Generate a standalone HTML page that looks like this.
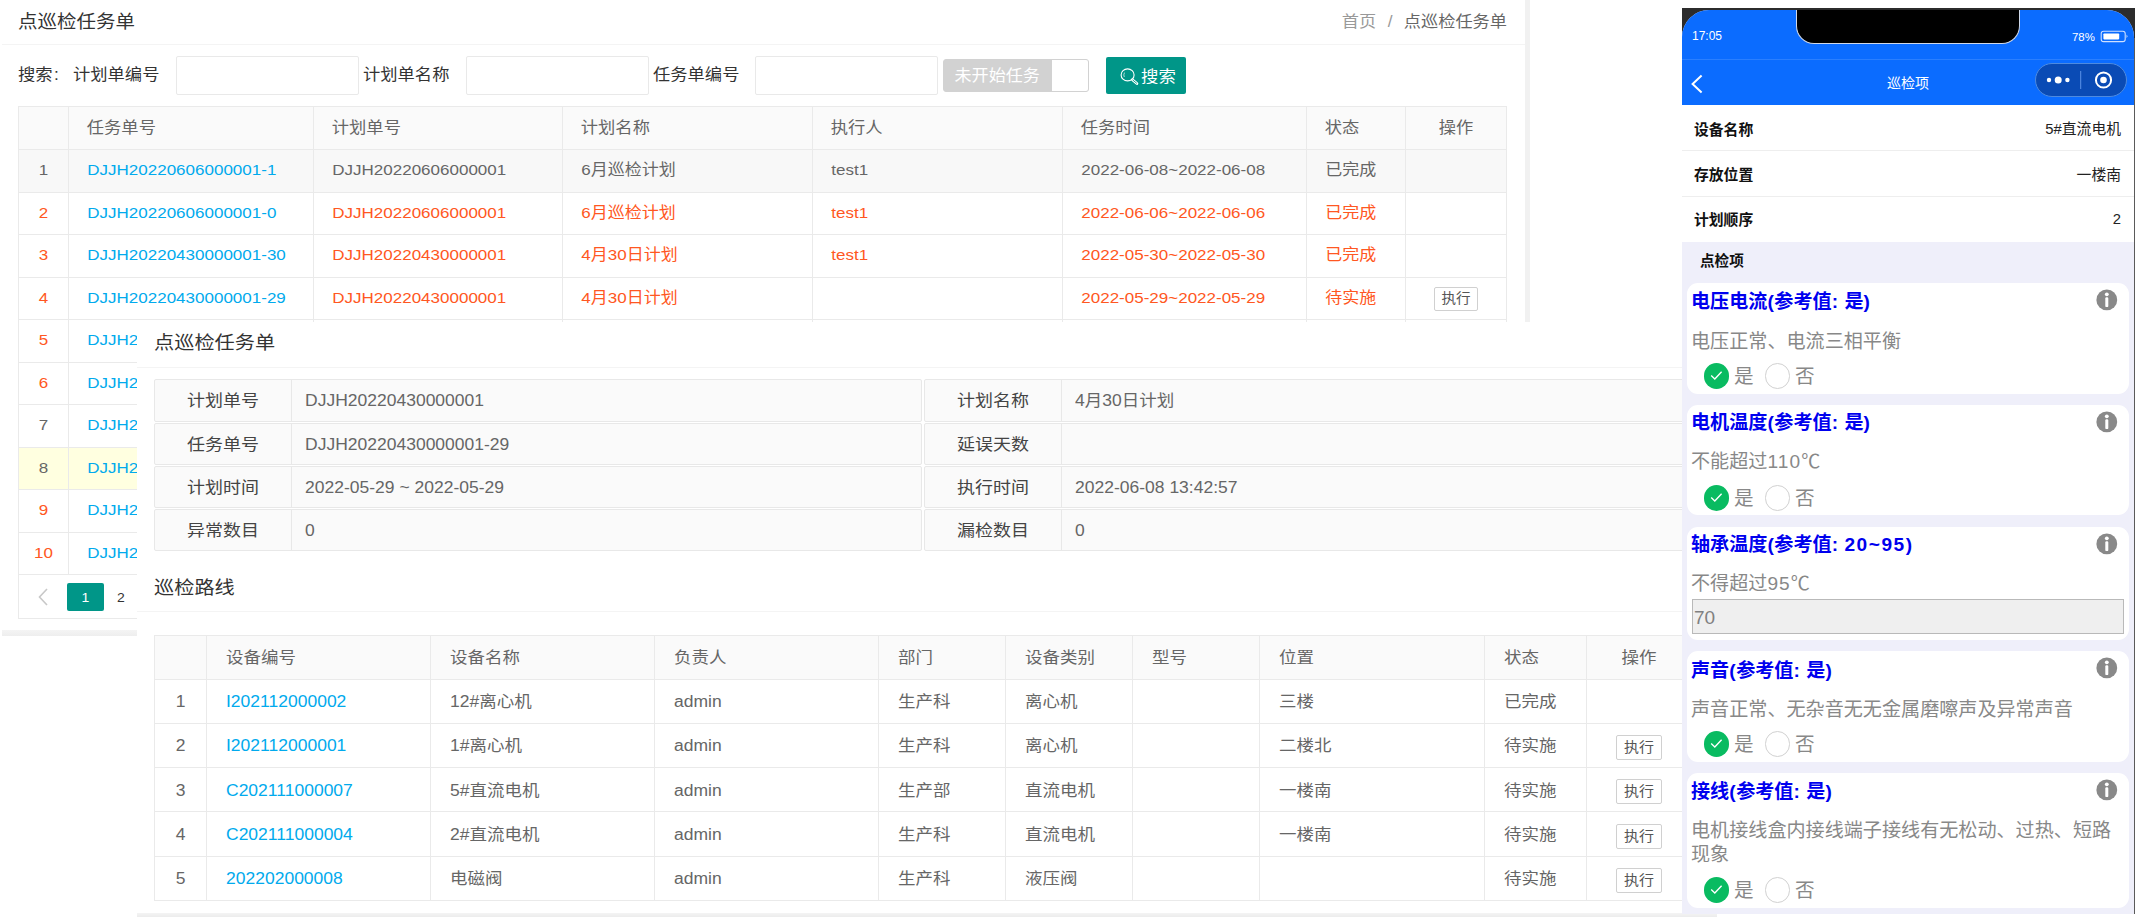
<!DOCTYPE html>
<html lang="zh-CN">
<head>
<meta charset="utf-8">
<title>点巡检任务单</title>
<style>
*{box-sizing:border-box;margin:0;padding:0}
html,body{width:2138px;height:924px;background:#fff;overflow:hidden}
body{position:relative;font-family:"Liberation Sans","Noto Sans CJK SC",sans-serif;color:#555;font-size:16.6px}
.abs{position:absolute}
/* ---------- panel 1 ---------- */
#p1{position:absolute;left:0;top:0;width:1530px;height:640px;background:#fff;overflow:hidden}
#p1 .hd{position:absolute;left:18px;top:10px;font-size:19.5px;color:#333;line-height:24px}
#p1 .bc{position:absolute;right:23px;top:9.5px;font-size:17.2px;line-height:24px;color:#999;white-space:nowrap}
#p1 .bc b{font-weight:normal;color:#666}
#p1 .bc i{font-style:normal;margin:0 11.4px 0 11.6px;color:#999}
#p1 .hl{position:absolute;left:2px;top:44px;width:1523px;height:1px;background:#f4f4f4}
#p1 .vbar{position:absolute;left:1525px;top:0;width:5px;height:322px;background:#f1f1f1}
#p1 .hbar{position:absolute;left:2px;top:630px;width:135px;height:6px;background:linear-gradient(#f4f4f4,#eeeeee)}
.lab{position:absolute;top:62.5px;line-height:24px;font-size:17.3px;color:#333;white-space:nowrap}
.inp{position:absolute;top:56px;height:39px;border:1px solid #e9e9e9;border-radius:2px;background:#fff}
.sw{position:absolute;left:942.5px;top:59px;width:146.5px;height:33px;border:1px solid #d2d2d2;border-radius:3px;background:#d2d2d2;color:#fff;font-size:17.1px;line-height:32px;padding-left:11px;white-space:nowrap}
.sw s{position:absolute;right:0;top:0;width:36px;height:31px;background:#fff;border-radius:0 2px 2px 0}
.btn{position:absolute;left:1106px;top:57px;width:80px;height:37px;background:#009688;border-radius:2px;color:#fff;font-size:17.4px;line-height:40.5px;white-space:nowrap}
.btn svg{position:absolute;left:13px;top:10px}
.btn>span{position:absolute;left:35px;top:0}
table{border-collapse:collapse;table-layout:fixed}
.t1{position:absolute;left:18px;top:106px;width:1489px;font-size:17px;color:#666}
.t1 td,.t1 th{border:1px solid #eaeaea;height:42.5px;line-height:20px;padding:0 0 0 18.3px;text-align:left;font-weight:normal;white-space:nowrap;overflow:hidden}
.t1 th{background:#fafafa;height:43px;color:#666;padding-top:2px;font-size:17.3px;padding-left:17.8px}
.t1 td:first-child,.t1 th:first-child{padding:0;text-align:center}
.t1 tr.r td{color:#FF5722}
.t1 td.k,.t1 tr.r td.k{color:#01AAED}
.t1 tr.g td{background:#f8f8f8}
.t1 tr.y td{background:#ffffe0}
.ex{display:inline-block;border:1px solid #d0d0d0;border-radius:2px;background:#fff;color:#555;font-size:14.6px;line-height:21px;height:24px;padding:0 6.5px;position:relative;top:1px}
.pg{position:absolute;left:18px;top:575px;width:120px;height:44px;border:1px solid #eaeaea;border-top:none}
.pg .pv{position:absolute;left:18px;top:12px}
.pg .cur{position:absolute;left:48px;top:8px;width:37px;height:28px;background:#009688;color:#fff;border-radius:2px;text-align:center;line-height:28px;font-size:14px}
.pg .n2{position:absolute;left:98px;top:8px;line-height:28px;font-size:14px;color:#333}

/* ---------- panel 2 ---------- */
#p2{position:absolute;left:137px;top:322px;width:1580px;height:595px;background:#fff;overflow:hidden;font-size:17.5px;color:#666}
#p2 .h2{position:absolute;left:17px;font-size:20.2px;line-height:26px;color:#333;white-space:nowrap}
#p2 .ln{position:absolute;left:0;width:1560px;height:1px;background:#f4f4f4}
.fr{position:absolute;height:42.4px;border:1px solid #e8e8e8;border-radius:2px;background:#fafafa}
.fr .l{position:absolute;left:0;top:0;width:137px;height:40.4px;border-right:1px solid #e8e8e8;text-align:center;line-height:42.5px;color:#444;font-size:18px;white-space:nowrap}
.fr .v{position:absolute;left:150px;top:0;line-height:41.5px;color:#666;white-space:nowrap}
.t2{position:absolute;left:17px;top:313px;width:1537px;font-size:17.5px;color:#666}
.t2 td,.t2 th{border:1px solid #eaeaea;height:44.3px;line-height:20px;padding:0 0 0 19px;text-align:left;font-weight:normal;white-space:nowrap;overflow:hidden}
.t2 th{background:#fafafa;height:43.6px}
.t2 td:first-child,.t2 th:first-child{padding:0;text-align:center}
.t2 td.k{color:#01AAED}
.t2 td.c,.t2 th.c{padding:0;text-align:center}
.t2 .ex{font-size:15px;height:25px;line-height:23px;padding:0 7px;position:relative;top:2px}
#p2 .bbar{position:absolute;left:0;top:591px;width:1580px;height:4px;background:linear-gradient(#f4f4f4,#ececec)}

/* ---------- panel 3 : phone ---------- */
#p3{position:absolute;left:1682px;top:8px;width:453px;height:906px;background:#2c2c2c;overflow:hidden;font-family:"Liberation Sans","Noto Sans CJK SC",sans-serif}
#p3 .scr{position:absolute;left:0;top:2px;width:452px;height:904px;background:#efeffa;border-radius:27px 27px 0 0;overflow:hidden}
#p3 .top{position:absolute;left:0;top:0;width:452px;height:95px;background:#0b6cff}
#p3 .sep{position:absolute;left:0;top:49px;width:452px;height:1px;background:#2a7fff}
#p3 .notch{position:absolute;left:114px;top:-20px;width:224px;height:54px;background:#000;border-radius:0 0 18px 18px;border:1px solid #cfd8e8;border-top:none}
#p3 .time{position:absolute;left:10px;top:19px;font-size:12px;line-height:14px;color:#fff}
#p3 .pct{position:absolute;left:390px;top:20px;font-size:11.4px;line-height:14px;color:#fff}
#p3 .nt{position:absolute;left:0;top:63px;width:452px;text-align:center;font-size:14px;line-height:20px;color:#fff}
#p3 .cap{position:absolute;left:353px;top:53px;width:92px;height:34px;border-radius:17px;background:#0a4bb5;border:1px solid #4d8ae0}
.row{position:absolute;left:0;width:452px;height:46px;background:#fff;border-bottom:1px solid #eee}
.row b{position:absolute;left:12px;top:13px;font-size:14.8px;line-height:20px;color:#111;font-weight:bold;white-space:nowrap}
.row span{position:absolute;right:13px;top:13px;font-size:14.8px;line-height:20px;color:#222;white-space:nowrap}
.sec{position:absolute;left:18px;top:241px;font-size:14.6px;line-height:20px;font-weight:bold;color:#111}
.card{position:absolute;left:5px;width:442px;background:#fff;border-radius:11px}
.card .ti u{text-decoration:none;letter-spacing:0.6px}
.card .ti{position:absolute;left:4px;top:7px;font-size:19.1px;line-height:24px;font-weight:bold;color:#0000ee;white-space:nowrap}
.card .de u{text-decoration:none;letter-spacing:1.1px}
.card .de{position:absolute;left:4px;top:44px;font-size:19.1px;line-height:24px;color:#888;width:432px}
.card .inf{position:absolute;left:409px;top:6px}
.rd{position:absolute;left:0;height:26px;width:200px}
.rd .on{position:absolute;left:16.5px;top:0;width:25.6px;height:25.6px;border-radius:50%;background:#09bb61}
.rd .on svg{position:absolute;left:6px;top:7px}
.rd .off{position:absolute;left:77.7px;top:0;width:25.6px;height:25.6px;border-radius:50%;background:#fff;border:1px solid #d1d1d1}
.rd i{position:absolute;top:0.5px;font-style:normal;font-size:19.6px;line-height:24px;color:#888}
.tin{position:absolute;left:5px;top:72px;width:432px;height:35px;background:#efefef;border:1px solid #b9b9b9;font-size:19px;line-height:36px;color:#808080;padding-left:1px}
.q{display:inline-block;transform:scaleY(.905);transform-origin:50% 50%}
.t1 .q{position:relative;top:-0.7px}
.t1 .ex .q{top:0}
.t2 .q{position:relative;top:0.7px}
.t2 .ex .q{top:0}
</style>
</head>
<body>
<!-- =============== PANEL 1 : task list =============== -->
<div id="p1">
  <div class="hd"><span class="q">点巡检任务单</span></div>
  <div class="bc"><span class="q">首页<i>/</i><b>点巡检任务单</b></span></div>
  <div class="hl"></div>
  <div class="vbar"></div>
  <div class="lab" style="left:18px"><span class="q">搜索<span style="margin-left:1.5px">:</span></span></div>
  <div class="lab" style="left:73px"><span class="q">计划单编号</span></div>
  <div class="inp" style="left:176px;width:183px"></div>
  <div class="lab" style="left:363px"><span class="q">计划单名称</span></div>
  <div class="inp" style="left:466px;width:183px"></div>
  <div class="lab" style="left:653px"><span class="q">任务单编号</span></div>
  <div class="inp" style="left:755px;width:183px"></div>
  <div class="sw"><span class="q">未开始任务</span><s></s></div>
  <div class="btn"><svg width="22" height="20" viewBox="0 0 22 20"><ellipse cx="8.6" cy="7.9" rx="6.5" ry="6" fill="none" stroke="#fff" stroke-width="1.1"/><path d="M5.5 5.6 Q4.2 7.9 5.3 10" fill="none" stroke="#fff" stroke-width="0.8" opacity=".85"/><path d="M13.4 12.7 L17.9 16.5" stroke="#fff" stroke-width="2.8" stroke-linecap="round"/><path d="M13.9 13.1 L17.6 16.2" stroke="#009688" stroke-width="0.9" stroke-linecap="round"/></svg><span><span class="q">搜索</span></span></div>
  <table class="t1">
    <colgroup><col style="width:50px"><col style="width:245px"><col style="width:249px"><col style="width:250px"><col style="width:250px"><col style="width:244px"><col style="width:99px"><col style="width:101px"></colgroup>
    <tr><th></th><th><span class="q">任务单号</span></th><th><span class="q">计划单号</span></th><th><span class="q">计划名称</span></th><th><span class="q">执行人</span></th><th><span class="q">任务时间</span></th><th><span class="q">状态</span></th><th style="text-align:center;padding:2px 0 0"><span class="q">操作</span></th></tr>
    <tr class="g"><td><span class="q">1</span></td><td class="k"><span class="q">DJJH20220606000001-1</span></td><td><span class="q">DJJH20220606000001</span></td><td><span class="q">6月巡检计划</span></td><td><span class="q">test1</span></td><td><span class="q">2022-06-08~2022-06-08</span></td><td><span class="q">已完成</span></td><td></td></tr>
    <tr class="r"><td><span class="q">2</span></td><td class="k"><span class="q">DJJH20220606000001-0</span></td><td><span class="q">DJJH20220606000001</span></td><td><span class="q">6月巡检计划</span></td><td><span class="q">test1</span></td><td><span class="q">2022-06-06~2022-06-06</span></td><td><span class="q">已完成</span></td><td></td></tr>
    <tr class="r"><td><span class="q">3</span></td><td class="k"><span class="q">DJJH20220430000001-30</span></td><td><span class="q">DJJH20220430000001</span></td><td><span class="q">4月30日计划</span></td><td><span class="q">test1</span></td><td><span class="q">2022-05-30~2022-05-30</span></td><td><span class="q">已完成</span></td><td></td></tr>
    <tr class="r"><td><span class="q">4</span></td><td class="k"><span class="q">DJJH20220430000001-29</span></td><td><span class="q">DJJH20220430000001</span></td><td><span class="q">4月30日计划</span></td><td></td><td><span class="q">2022-05-29~2022-05-29</span></td><td><span class="q">待实施</span></td><td style="padding:0;text-align:center"><span class="ex"><span class="q">执行</span></span></td></tr>
    <tr class="r"><td><span class="q">5</span></td><td class="k"><span class="q">DJJH20220430000001-28</span></td><td><span class="q">DJJH20220430000001</span></td><td><span class="q">4月30日计划</span></td><td></td><td><span class="q">2022-05-28~2022-05-28</span></td><td><span class="q">待实施</span></td><td></td></tr>
    <tr class="r"><td><span class="q">6</span></td><td class="k"><span class="q">DJJH20220430000001-27</span></td><td><span class="q">DJJH20220430000001</span></td><td><span class="q">4月30日计划</span></td><td></td><td><span class="q">2022-05-27~2022-05-27</span></td><td><span class="q">待实施</span></td><td></td></tr>
    <tr><td><span class="q">7</span></td><td class="k"><span class="q">DJJH20220430000001-26</span></td><td><span class="q">DJJH20220430000001</span></td><td><span class="q">4月30日计划</span></td><td></td><td><span class="q">2022-05-26~2022-05-26</span></td><td><span class="q">待实施</span></td><td></td></tr>
    <tr class="y"><td><span class="q">8</span></td><td class="k"><span class="q">DJJH20220430000001-25</span></td><td><span class="q">DJJH20220430000001</span></td><td><span class="q">4月30日计划</span></td><td></td><td><span class="q">2022-05-25~2022-05-25</span></td><td><span class="q">待实施</span></td><td></td></tr>
    <tr class="r"><td><span class="q">9</span></td><td class="k"><span class="q">DJJH20220430000001-24</span></td><td><span class="q">DJJH20220430000001</span></td><td><span class="q">4月30日计划</span></td><td></td><td><span class="q">2022-05-24~2022-05-24</span></td><td><span class="q">待实施</span></td><td></td></tr>
    <tr class="r"><td><span class="q">10</span></td><td class="k"><span class="q">DJJH20220430000001-23</span></td><td><span class="q">DJJH20220430000001</span></td><td><span class="q">4月30日计划</span></td><td></td><td><span class="q">2022-05-23~2022-05-23</span></td><td><span class="q">待实施</span></td><td></td></tr>
  </table>
  <div class="pg"><svg class="pv" width="12" height="20" viewBox="0 0 12 20"><path d="M10 2 L2.5 10 L10 18" fill="none" stroke="#c8c8c8" stroke-width="1.6"/></svg><div class="cur"><span class="q">1</span></div><div class="n2"><span class="q">2</span></div></div>
  <div class="hbar"></div>
</div>
<!-- =============== PANEL 2 : task detail =============== -->
<div id="p2">
  <div class="h2" style="top:8.3px"><span class="q">点巡检任务单</span></div>
  <div class="ln" style="top:45px"></div>
  <div class="fr" style="left:17px;top:57.3px;width:768px"><div class="l"><span class="q">计划单号</span></div><div class="v"><span class="q">DJJH20220430000001</span></div></div>
  <div class="fr" style="left:17px;top:100.5px;width:768px"><div class="l"><span class="q">任务单号</span></div><div class="v"><span class="q">DJJH20220430000001-29</span></div></div>
  <div class="fr" style="left:17px;top:143.7px;width:768px"><div class="l"><span class="q">计划时间</span></div><div class="v"><span class="q">2022-05-29 ~ 2022-05-29</span></div></div>
  <div class="fr" style="left:17px;top:186.9px;width:768px"><div class="l"><span class="q">异常数目</span></div><div class="v"><span class="q">0</span></div></div>
  <div class="fr" style="left:787px;top:57.3px;width:780px"><div class="l"><span class="q">计划名称</span></div><div class="v"><span class="q">4月30日计划</span></div></div>
  <div class="fr" style="left:787px;top:100.5px;width:780px"><div class="l"><span class="q">延误天数</span></div><div class="v"></div></div>
  <div class="fr" style="left:787px;top:143.7px;width:780px"><div class="l"><span class="q">执行时间</span></div><div class="v"><span class="q">2022-06-08 13:42:57</span></div></div>
  <div class="fr" style="left:787px;top:186.9px;width:780px"><div class="l"><span class="q">漏检数目</span></div><div class="v"><span class="q">0</span></div></div>
  <div class="h2" style="top:253px"><span class="q">巡检路线</span></div>
  <div class="ln" style="top:289px"></div>
  <table class="t2">
    <colgroup><col style="width:52px"><col style="width:224px"><col style="width:224px"><col style="width:224px"><col style="width:127px"><col style="width:127px"><col style="width:127px"><col style="width:225px"><col style="width:102px"><col style="width:105px"></colgroup>
    <tr><th></th><th><span class="q">设备编号</span></th><th><span class="q">设备名称</span></th><th><span class="q">负责人</span></th><th><span class="q">部门</span></th><th><span class="q">设备类别</span></th><th><span class="q">型号</span></th><th><span class="q">位置</span></th><th><span class="q">状态</span></th><th class="c"><span class="q">操作</span></th></tr>
    <tr><td><span class="q">1</span></td><td class="k"><span class="q">I202112000002</span></td><td><span class="q">12#离心机</span></td><td><span class="q">admin</span></td><td><span class="q">生产科</span></td><td><span class="q">离心机</span></td><td></td><td><span class="q">三楼</span></td><td><span class="q">已完成</span></td><td class="c"></td></tr>
    <tr><td><span class="q">2</span></td><td class="k"><span class="q">I202112000001</span></td><td><span class="q">1#离心机</span></td><td><span class="q">admin</span></td><td><span class="q">生产科</span></td><td><span class="q">离心机</span></td><td></td><td><span class="q">二楼北</span></td><td><span class="q">待实施</span></td><td class="c"><span class="ex"><span class="q">执行</span></span></td></tr>
    <tr><td><span class="q">3</span></td><td class="k"><span class="q">C202111000007</span></td><td><span class="q">5#直流电机</span></td><td><span class="q">admin</span></td><td><span class="q">生产部</span></td><td><span class="q">直流电机</span></td><td></td><td><span class="q">一楼南</span></td><td><span class="q">待实施</span></td><td class="c"><span class="ex"><span class="q">执行</span></span></td></tr>
    <tr><td><span class="q">4</span></td><td class="k"><span class="q">C202111000004</span></td><td><span class="q">2#直流电机</span></td><td><span class="q">admin</span></td><td><span class="q">生产科</span></td><td><span class="q">直流电机</span></td><td></td><td><span class="q">一楼南</span></td><td><span class="q">待实施</span></td><td class="c"><span class="ex"><span class="q">执行</span></span></td></tr>
    <tr><td><span class="q">5</span></td><td class="k"><span class="q">202202000008</span></td><td><span class="q">电磁阀</span></td><td><span class="q">admin</span></td><td><span class="q">生产科</span></td><td><span class="q">液压阀</span></td><td></td><td></td><td><span class="q">待实施</span></td><td class="c"><span class="ex"><span class="q">执行</span></span></td></tr>
  </table>
  <div class="bbar"></div>
</div>
<!-- =============== PANEL 3 : phone =============== -->
<div id="p3">
<div class="abs" style="left:452px;top:30px;width:1px;height:876px;background:#5a5a5a"></div>
<div class="scr">
  <div class="top"></div><div class="sep"></div><div class="notch"></div>
  <div class="time">17:05</div><div class="pct">78%</div>
  <svg class="abs" style="left:417.5px;top:20px" width="30" height="14" viewBox="0 0 30 14"><rect x="1.2" y="1.2" width="24" height="10.4" rx="2.4" fill="none" stroke="#cfe0ff" stroke-width="1.1"/><rect x="3.4" y="3.4" width="15.8" height="6" rx="0.8" fill="#fff"/><path d="M26.6 4.6 q1.8 1.8 0 3.6z" fill="#fff"/></svg>
  <svg class="abs" style="left:8px;top:64px" width="14" height="20" viewBox="0 0 14 20"><path d="M11.6 1.6 L2.6 10 L11.6 18.4" fill="none" stroke="#fff" stroke-width="2"/></svg>
  <div class="nt">巡检项</div>
  <div class="cap"><svg width="90" height="32" viewBox="0 0 90 32" style="position:absolute;left:0;top:0"><circle cx="13" cy="16" r="2.2" fill="#fff"/><circle cx="22.2" cy="16" r="3.5" fill="#fff"/><circle cx="31.4" cy="16" r="2.2" fill="#fff"/><rect x="44.2" y="7" width="1" height="18" fill="#5d93e6"/><circle cx="67.5" cy="16" r="7.6" fill="none" stroke="#fff" stroke-width="2"/><circle cx="67.5" cy="16" r="3.3" fill="#fff"/></svg></div>
  <div class="row" style="top:95px"><b style="top:14.7px">设备名称</b><span style="top:14.2px">5#直流电机</span></div>
  <div class="row" style="top:141px"><b style="top:13.7px">存放位置</b><span style="top:13.7px">一楼南</span></div>
  <div class="row" style="top:187px;border-bottom:none;height:45px"><b>计划顺序</b><span style="top:12px">2</span></div>
  <div class="sec">点检项</div>
  <div class="card" style="top:273px;height:111px"><div class="ti" style="top:7px">电压电流<u>(</u>参考值<u>: </u>是<u>)</u></div><svg class="inf" width="22" height="22" viewBox="0 0 22 22"><circle cx="10.8" cy="10.9" r="10.4" fill="#898989"/><circle cx="10.8" cy="5.3" r="1.9" fill="#fff"/><rect x="9.3" y="8.2" width="3" height="9.9" rx="1.2" fill="#fff"/></svg><div class="de" style="top:47px">电压正常、电流三相平衡</div><div class="rd" style="top:80px"><div class="on"><svg width="13" height="11" viewBox="0 0 13 11"><path d="M1.2 5.6 L4.8 9 L11.6 1.8" fill="none" stroke="#fff" stroke-width="1.35"/></svg></div><i style="left:47px">是</i><div class="off"></div><i style="left:108px">否</i></div></div>
  <div class="card" style="top:395px;height:110px"><div class="ti" style="top:6px">电机温度<u>(</u>参考值<u>: </u>是<u>)</u></div><svg class="inf" width="22" height="22" viewBox="0 0 22 22"><circle cx="10.8" cy="10.9" r="10.4" fill="#898989"/><circle cx="10.8" cy="5.3" r="1.9" fill="#fff"/><rect x="9.3" y="8.2" width="3" height="9.9" rx="1.2" fill="#fff"/></svg><div class="de" style="top:45px">不能超过<u>110</u>℃</div><div class="rd" style="top:80px"><div class="on"><svg width="13" height="11" viewBox="0 0 13 11"><path d="M1.2 5.6 L4.8 9 L11.6 1.8" fill="none" stroke="#fff" stroke-width="1.35"/></svg></div><i style="left:47px">是</i><div class="off"></div><i style="left:108px">否</i></div></div>
  <div class="card" style="top:517px;height:113px"><div class="ti" style="top:6px">轴承温度<u>(</u>参考值<u>: </u><u style="letter-spacing:1.5px">20~95</u><u>)</u></div><svg class="inf" width="22" height="22" viewBox="0 0 22 22"><circle cx="10.8" cy="10.9" r="10.4" fill="#898989"/><circle cx="10.8" cy="5.3" r="1.9" fill="#fff"/><rect x="9.3" y="8.2" width="3" height="9.9" rx="1.2" fill="#fff"/></svg><div class="de" style="top:45px">不得超过<u>95</u>℃</div><div class="tin">70</div></div>
  <div class="card" style="top:641px;height:111px"><div class="ti" style="top:7.7px">声音<u>(</u>参考值<u>: </u>是<u>)</u></div><svg class="inf" width="22" height="22" viewBox="0 0 22 22"><circle cx="10.8" cy="10.9" r="10.4" fill="#898989"/><circle cx="10.8" cy="5.3" r="1.9" fill="#fff"/><rect x="9.3" y="8.2" width="3" height="9.9" rx="1.2" fill="#fff"/></svg><div class="de" style="top:47px">声音正常、无杂音无无金属磨嚓声及异常声音</div><div class="rd" style="top:80px"><div class="on"><svg width="13" height="11" viewBox="0 0 13 11"><path d="M1.2 5.6 L4.8 9 L11.6 1.8" fill="none" stroke="#fff" stroke-width="1.35"/></svg></div><i style="left:47px">是</i><div class="off"></div><i style="left:108px">否</i></div></div>
  <div class="card" style="top:763px;height:135px"><div class="ti" style="top:7px">接线<u>(</u>参考值<u>: </u>是<u>)</u></div><svg class="inf" width="22" height="22" viewBox="0 0 22 22"><circle cx="10.8" cy="10.9" r="10.4" fill="#898989"/><circle cx="10.8" cy="5.3" r="1.9" fill="#fff"/><rect x="9.3" y="8.2" width="3" height="9.9" rx="1.2" fill="#fff"/></svg><div class="de" style="top:46px">电机接线盒内接线端子接线有无松动、过热、短路现象</div><div class="rd" style="top:104px"><div class="on"><svg width="13" height="11" viewBox="0 0 13 11"><path d="M1.2 5.6 L4.8 9 L11.6 1.8" fill="none" stroke="#fff" stroke-width="1.35"/></svg></div><i style="left:47px">是</i><div class="off"></div><i style="left:108px">否</i></div></div>
</div>
</div>
</body>
</html>
